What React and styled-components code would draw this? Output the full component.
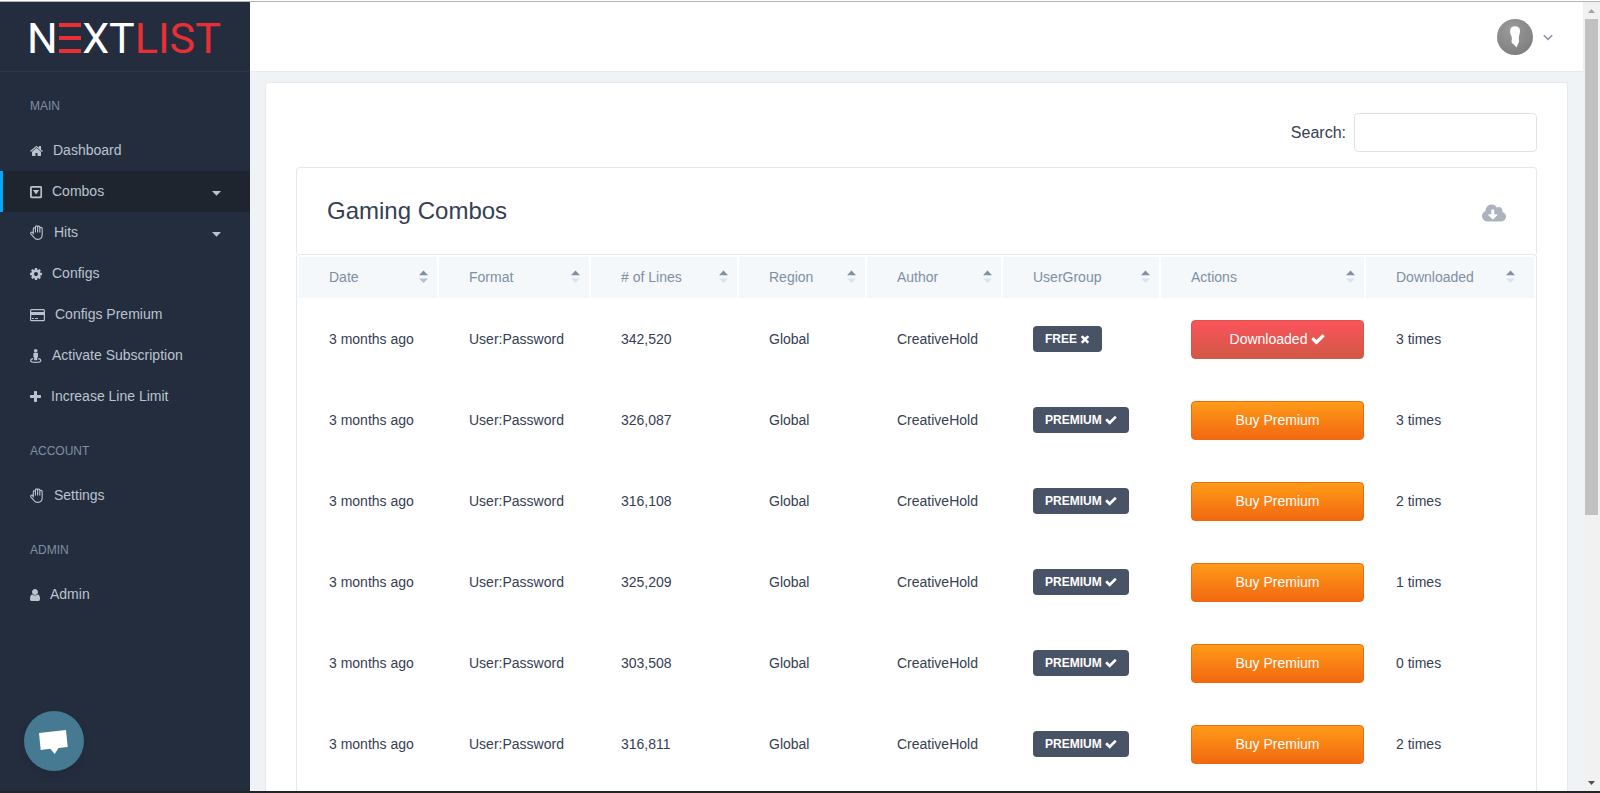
import React, { useState } from "react";
import styled, { createGlobalStyle, css } from "styled-components";
import { FaCloudDownloadAlt } from "react-icons/fa";

const GlobalStyle = createGlobalStyle`
  * {
    box-sizing: border-box;
  }
  body {
    margin: 0;
    font-family: "Liberation Sans", Arial, sans-serif;
    font-size: 14px;
    color: #354052;
    background: #eff3f6;
  }
  button, input {
    font-family: inherit;
  }
`;

/* ---------- icons ---------- */

const Glyph = styled.svg`
  display: block;
  flex: none;
  width: ${({ $w }) => $w || 14}px;
  height: ${({ $h }) => $h || 14}px;
  fill: currentColor;
`;

const HomeIcon = () => (
  <Glyph $w={13} viewBox="64 0 1664 1792">
    <path d="M1472 992v480q0 26-19 45t-45 19h-384v-384h-256v384h-384q-26 0-45-19t-19-45v-480q0-1 .5-3t.5-3l575-474 575 474q1 2 1 6zm223-69l-62 74q-8 9-21 11h-3q-13 0-21-7l-692-577-692 577q-12 8-24 7-13-2-21-11l-62-74q-8-10-7-23.5t11-21.5l719-599q32-26 76-26t76 26l244 204v-195q0-14 9-23t23-9h192q14 0 23 9t9 23v408l219 182q10 8 11 21.5t-7 23.5z" />
  </Glyph>
);

const CaretSquareIcon = () => (
  <Glyph $w={12} viewBox="0 0 12 14">
    <rect
      x="0.9"
      y="1.9"
      width="10.4"
      height="10.4"
      rx="1"
      fill="none"
      stroke="currentColor"
      strokeWidth="1.8"
    />
    <path d="M2.900 5h6.400L6.100 9.600z" />
  </Glyph>
);

const HandIcon = () => (
  <Glyph $w={14} $h={15} viewBox="0 0 14 15">
    <path
      d="M3.300 9V3.800q0-1.100 1-1.100t1.100.9V2.100q0-1.200 1.100-1.200t1.100 1.100q0-.9 1.100-.9t1.100 1.200v.9q0-.8 1.200-.8t1.200 1.300V9.500q0 4.900-4.500 4.900H7.400q-2 0-3.200-1.700L1 9.100q-.7-1 .1-1.700t1.700.2zM5.400 3.500v4M7.600 2v5.500M9.800 3.200v4.300"
      fill="none"
      stroke="currentColor"
      strokeWidth="1.100"
      strokeLinejoin="round"
    />
  </Glyph>
);

const CogIcon = () => (
  <Glyph $w={12} viewBox="128 0 1536 1792">
    <path d="M1152 896q0-106-75-181t-181-75-181 75-75 181 75 181 181 75 181-75 75-181zm512-109v222q0 12-8 23t-20 13l-185 28q-19 54-39 91 35 50 107 138 10 12 10 25t-9 23q-27 37-99 108t-94 71q-12 0-26-9l-138-108q-44 23-91 38-16 136-29 186-7 28-36 28h-222q-14 0-24.5-8.5t-11.5-21.5l-28-184q-49-16-90-37l-141 107q-10 9-25 9-14 0-25-11-126-114-165-168-7-10-7-23 0-12 8-23 15-21 51-66.5t54-70.5q-27-50-41-99l-183-27q-13-2-21-12.5t-8-23.5v-222q0-12 8-23t19-13l186-28q14-46 39-92-40-57-107-138-10-12-10-24 0-10 9-23 26-36 98.5-107.5t94.5-71.5q13 0 26 10l138 107q44-23 91-38 16-136 29-186 7-28 36-28h222q14 0 24.5 8.5t11.5 21.5l28 184q49 16 90 37l142-107q9-9 24-9 13 0 25 10 129 119 165 170 7 8 7 22 0 12-8 23-15 21-51 66.5t-54 70.5q26 50 41 98l183 28q13 2 21 12.5t8 23.5z" />
  </Glyph>
);

const CardIcon = () => (
  <Glyph $w={15} viewBox="0 0 15 14">
    <rect
      x="0.6"
      y="1.6"
      width="13.8"
      height="11"
      rx="0.9"
      fill="none"
      stroke="currentColor"
      strokeWidth="1.2"
    />
    <path d="M.6 4h13.800v3H.6zM2 10h2v1H2zM5 10h3v1H5z" />
  </Glyph>
);

const StreetViewIcon = () => (
  <Glyph $w={12} viewBox="0 0 12 14">
    <circle cx="5.7" cy="1.8" r="1.8" />
    <path d="M4.400 3.800h2.600q1 0 1 1v3q0 .6-.7.6v2.300q0 .6-.6.6H4.700q-.6 0-.6-.6V8.400q-.7 0-.7-.6v-3q0-1 1-1z" />
    <path
      d="M3.200 9.700C1.600 10 .6 10.600.6 11.400c0 1.100 2.300 1.900 5.100 1.900s5.100-.8 5.100-1.900c0-.8-1-1.400-2.600-1.700"
      fill="none"
      stroke="currentColor"
      strokeWidth="1.2"
    />
  </Glyph>
);

const PlusIcon = () => (
  <Glyph $w={11} viewBox="192 0 1408 1792">
    <path d="M1600 736v192q0 40-28 68t-68 28h-416v416q0 40-28 68t-68 28h-192q-40 0-68-28t-28-68v-416h-416q-40 0-68-28t-28-68v-192q0-40 28-68t68-28h416v-416q0-40 28-68t68-28h192q40 0 68 28t28 68v416h416q40 0 68 28t28 68z" />
  </Glyph>
);

const UserIcon = () => (
  <Glyph $w={10} viewBox="256 0 1280 1792">
    <path d="M1536 1399q0 109-62.5 187t-150.5 78h-854q-88 0-150.5-78t-62.5-187q0-85 8.5-160.5t31.5-152 58.5-131 94-89 134.5-34.5q131 128 313 128t313-128q76 0 134.5 34.5t94 89 58.5 131 31.5 152 8.5 160.5zm-256-887q0 159-112.5 271.5t-271.5 112.5-271.5-112.5-112.5-271.5 112.5-271.5 271.5-112.5 271.5 112.5 112.5 271.5z" />
  </Glyph>
);

const CheckIcon = ({ size = 12 }) => (
  <Glyph $w={size} $h={size} viewBox="64 64 1664 1664">
    <path d="M1671 566q0 40-28 68l-724 724-136 136q-28 28-68 28t-68-28l-136-136-362-362q-28-28-28-68t28-68l136-136q28-28 68-28t68 28l294 295 656-657q28-28 68-28t68 28l136 136q28 28 28 68z" />
  </Glyph>
);

const TimesIcon = () => (
  <Glyph $w={10} $h={12} viewBox="192 0 1408 1792">
    <path d="M1490 1322q0 40-28 68l-136 136q-28 28-68 28t-68-28l-294-294-294 294q-28 28-68 28t-68-28l-136-136q-28-28-28-68t28-68l294-294-294-294q-28-28-28-68t28-68l136-136q28-28 68-28t68 28l294 294 294-294q28-28 68-28t68 28l136 136q28 28 28 68t-28 68l-294 294 294 294q28 28 28 68z" />
  </Glyph>
);

/* ---------- frame ---------- */

const Screen = styled.div`
  display: flex;
  flex-direction: column;
  height: 100vh;
  overflow: hidden;
  border-bottom: 2px solid #222427;
`;

const TopEdge = styled.div`
  flex: none;
  height: 2px;
  background: #fff;
  border-bottom: 1px solid #b4b4b4;
`;

const Layout = styled.div`
  position: relative;
  display: flex;
  flex: 1;
  min-height: 0;
`;

/* ---------- sidebar ---------- */

const Sidebar = styled.aside`
  flex: none;
  width: 250px;
  background: #242d3e;
`;

const LogoBar = styled.div`
  display: flex;
  align-items: center;
  height: 70px;
  padding: 2px 27px 0;
  border-bottom: 1px solid #2c3648;
`;

const Logo = styled.a`
  font-family: Roboto, "Liberation Sans", sans-serif;
  font-size: 43px;
  font-weight: 400;
  line-height: 50px;
  color: #fff;
  text-decoration: none;
`;

const LogoRed = styled.span`
  color: #e92f35;
`;

/* the E is three bars without a stem */
const LogoBars = styled.span`
  color: transparent;
  background: linear-gradient(#e92f35, #e92f35) 50% 10px / 22px 4px no-repeat,
    linear-gradient(#e92f35, #e92f35) 50% 23px / 22px 4px no-repeat,
    linear-gradient(#e92f35, #e92f35) 50% 36px / 22px 4px no-repeat;
`;

const MenuLabel = styled.h2`
  margin: 0;
  padding: 25px 30px 15px;
  font-size: 12px;
  font-weight: 400;
  line-height: 18px;
  color: #7f8fa4;
`;

const MenuList = styled.ul`
  margin: 0;
  padding: 0;
  list-style: none;
`;

const MenuLink = styled.a`
  display: flex;
  align-items: center;
  gap: 10px;
  height: 41px;
  padding: 0 29px 0 27px;
  border-left: 3px solid transparent;
  color: #b9c4cf;
  text-decoration: none;
  ${({ $active }) =>
    $active &&
    css`
      background: #1e252f;
      border-left-color: #00a8ff;
    `}
`;

const MenuText = styled.span`
  flex: 1;
  padding-bottom: 2px;
`;

const ChatButton = styled.button`
  position: absolute;
  left: 24px;
  bottom: 20px;
  width: 60px;
  height: 60px;
  padding: 0;
  border: 0;
  border-radius: 50%;
  background: #467a92;
  box-shadow: 0 3px 8px rgba(0, 0, 0, 0.1);
`;

const ChatGlyph = styled.svg`
  display: block;
  width: 60px;
  height: 60px;
  fill: #fff;
`;

/* ---------- main ---------- */

const Main = styled.main`
  display: flex;
  flex-direction: column;
  flex: 1;
  min-width: 0;
`;

const Header = styled.header`
  display: flex;
  flex: none;
  align-items: center;
  justify-content: flex-end;
  height: 70px;
  padding-right: 30px;
  background: #fff;
  border-bottom: 1px solid #e6eaee;
`;

const ProfileButton = styled.button`
  display: flex;
  align-items: center;
  gap: 10px;
  padding: 0;
  border: 0;
  background: none;
  color: #8a93ab;
`;

const Content = styled.section`
  display: flex;
  flex: 1;
  min-height: 0;
  padding: 10px 15px 0;
`;

const Card = styled.div`
  display: flex;
  flex-direction: column;
  flex: 1;
  min-width: 0;
  padding: 30px 30px 0;
  background: #fff;
  border: 1px solid #e6eaee;
  border-bottom: 0;
  border-radius: 4px 4px 0 0;
`;

const SearchRow = styled.div`
  display: flex;
  align-items: center;
  justify-content: flex-end;
  gap: 8px;
  margin-bottom: 15px;
  font-size: 16px;
`;

const SearchInput = styled.input`
  width: 183px;
  height: 39px;
  padding: 0 12px;
  font-size: 14px;
  color: #354052;
  background: #fff;
  border: 1px solid #dfe3e9;
  border-radius: 4px;
`;

const PanelHead = styled.div`
  display: flex;
  flex: none;
  align-items: center;
  justify-content: space-between;
  height: 87px;
  padding: 0 30px;
  border: 1px solid #e6e8ee;
  border-bottom: 0;
  border-radius: 4px 4px 0 0;
`;

const Title = styled.h1`
  margin: 0;
  font-size: 24px;
  font-weight: 400;
  line-height: 36px;
`;

const CloudButton = styled.button`
  display: flex;
  padding: 4px 0 0;
  border: 0;
  background: none;
  color: #adb3bd;
`;

const TableWrap = styled.div`
  flex: 1;
  min-height: 0;
  border: 1px solid #e6e8ee;
  border-bottom: 0;
  border-radius: 4px 4px 0 0;
`;

const Table = styled.table`
  width: 100%;
  table-layout: fixed;
  border-collapse: separate;
  border-spacing: 2px;
`;

const Col = styled.col`
  width: ${({ $w }) => $w}px;
`;

const Th = styled.th`
  padding: 0;
  background: #f4f8fb;
`;

const SortButton = styled.button`
  display: flex;
  align-items: center;
  justify-content: space-between;
  width: 100%;
  height: 41px;
  padding: 0 ${({ $last }) => ($last ? 19 : 9)}px 2px 30px;
  border: 0;
  background: none;
  font-size: 14px;
  color: #7f8fa4;
`;

const Td = styled.td`
  height: 79px;
  padding: 19px 0 21px 30px;
`;

const ActionTd = styled(Td)`
  padding: 20px 0 20px 30px;
`;

const Badge = styled.span`
  display: inline-flex;
  align-items: center;
  gap: 3px;
  height: 26px;
  padding: 0 12px;
  border-radius: 4px;
  background: #495366;
  color: #fff;
  font-size: 12px;
  font-weight: 700;
`;

const ActionButton = styled.button`
  display: flex;
  align-items: center;
  justify-content: center;
  gap: 4px;
  width: 100%;
  height: 39px;
  padding: 0 0 2px;
  font-size: 14px;
  color: #fff;
  border: 1px solid ${({ $done }) => ($done ? "#d45848" : "#f1690f")};
  border-radius: 4px;
  background: ${({ $done }) =>
    $done
      ? "linear-gradient(#fb545b, #d15846)"
      : "linear-gradient(#ff9b19, #f26810)"};
`;

/* ---------- scrollbar ---------- */

const Scrollbar = styled.div`
  display: flex;
  flex-direction: column;
  flex: none;
  align-items: center;
  width: 17px;
  background: #f1f1f1;
`;

const ScrollEnd = styled.div`
  display: flex;
  flex: none;
  align-items: center;
  justify-content: center;
  height: 17px;
  color: ${({ $on }) => ($on ? "#505050" : "#a3a3a3")};
`;

const Thumb = styled.div`
  flex: 23;
  width: 13px;
  background: #c1c1c1;
`;

const Track = styled.div`
  flex: 12;
`;

const mainMenu = [
  { name: "Dashboard", icon: <HomeIcon /> },
  { name: "Combos", icon: <CaretSquareIcon />, sub: true },
  { name: "Hits", icon: <HandIcon />, sub: true },
  { name: "Configs", icon: <CogIcon /> },
  { name: "Configs Premium", icon: <CardIcon /> },
  { name: "Activate Subscription", icon: <StreetViewIcon /> },
  { name: "Increase Line Limit", icon: <PlusIcon /> },
];

const menus = [
  { label: "MAIN", items: mainMenu },
  { label: "ACCOUNT", items: [{ name: "Settings", icon: <HandIcon /> }] },
  { label: "ADMIN", items: [{ name: "Admin", icon: <UserIcon /> }] },
];

const columns = [
  { name: "Date", width: 138 },
  { name: "Format", width: 150 },
  { name: "# of Lines", width: 146 },
  { name: "Region", width: 126 },
  { name: "Author", width: 134 },
  { name: "UserGroup", width: 156 },
  { name: "Actions", width: 203 },
  { name: "Downloaded", width: 168 },
];

const combos = [
  { lines: "342,520", free: true, times: 3 },
  { lines: "326,087", times: 3 },
  { lines: "316,108", times: 2 },
  { lines: "325,209", times: 1 },
  { lines: "303,508", times: 0 },
  { lines: "316,811", times: 2 },
];

const Menu = () => {
  const [active, setActive] = useState("Combos");

  return (
    <nav>
      {menus.map((menu) => (
        <React.Fragment key={menu.label}>
          <MenuLabel>{menu.label}</MenuLabel>
          <MenuList>
            {menu.items.map((item) => (
              <li key={item.name}>
                <MenuLink
                  href="#"
                  $active={active === item.name}
                  onClick={() => setActive(item.name)}
                >
                  {item.icon}
                  <MenuText>{item.name}</MenuText>
                  {item.sub && (
                    <Glyph $w={9} $h={10} viewBox="0 0 9 10">
                      <path d="M0 4h9L4.500 8.700z" />
                    </Glyph>
                  )}
                </MenuLink>
              </li>
            ))}
          </MenuList>
        </React.Fragment>
      ))}
    </nav>
  );
};

const SortArrows = ({ sorted }) => (
  <Glyph $w={9} $h={13} viewBox="0 0 9 13">
    <path d="M0 5.300L4.500.5 9 5.300z" />
    <path d="M0 8.500h9L4.500 13z" fill={sorted ? "#b8c2ce" : "#dfe3e9"} />
  </Glyph>
);

const CombosTable = () => {
  const [sorted, setSorted] = useState("Date");

  return (
    <Table>
      <colgroup>
        {columns.map((col) => (
          <Col key={col.name} $w={col.width} />
        ))}
      </colgroup>
      <thead>
        <tr>
          {columns.map((col, i) => (
            <Th key={col.name} scope="col">
              <SortButton
                $last={i === columns.length - 1}
                onClick={() => setSorted(col.name)}
              >
                {col.name}
                <SortArrows sorted={sorted === col.name} />
              </SortButton>
            </Th>
          ))}
        </tr>
      </thead>
      <tbody>
        {combos.map((combo) => (
          <tr key={combo.lines}>
            <Td>3 months ago</Td>
            <Td>User:Password</Td>
            <Td>{combo.lines}</Td>
            <Td>Global</Td>
            <Td>CreativeHold</Td>
            <Td>
              <Badge>
                {combo.free ? "FREE" : "PREMIUM"}
                {combo.free ? <TimesIcon /> : <CheckIcon />}
              </Badge>
            </Td>
            <ActionTd>
              <ActionButton $done={combo.free}>
                {combo.free ? "Downloaded" : "Buy Premium"}
                {combo.free && <CheckIcon size={14} />}
              </ActionButton>
            </ActionTd>
            <Td>{combo.times} times</Td>
          </tr>
        ))}
      </tbody>
    </Table>
  );
};

const Profile = () => (
  <ProfileButton aria-label="Profile">
    <Glyph $w={36} $h={36} viewBox="0 0 36 36">
      <defs>
        <radialGradient id="avatar" cx="0.4" cy="0.3" r="0.8">
          <stop offset="0" stopColor="#9b9b9b" />
          <stop offset="1" stopColor="#7c7c7c" />
        </radialGradient>
      </defs>
      <circle cx="18" cy="18" r="18" fill="url(#avatar)" />
      <path
        d="M18 7.200c3.200 0 5 1.600 5 4.600 0 2.200-.5 3.600-1 5.200-.3 1.500-.3 2.800 0 4.200.2 1.600-.2 2.500-1 3.600l-1.400 3.600-2.800-2.900c-1.700-1.200-2.500-2-2.300-3.500.6-1.500.5-3-.2-5.200-.9-2-1.300-3.600-1.100-5.400C13.500 8.600 15 7.200 18 7.200z"
        fill="#fff"
      />
    </Glyph>
    <Glyph $w={10} $h={10} viewBox="0 0 10 10">
      <path
        d="M.8 3.200L5 7.400l4.200-4.200"
        fill="none"
        stroke="currentColor"
        strokeWidth="1.500"
      />
    </Glyph>
  </ProfileButton>
);

const App = () => {
  const [search, setSearch] = useState("");

  return (
    <Screen>
      <GlobalStyle />
      <TopEdge />
      <Layout>
        <Sidebar>
          <LogoBar>
            <Logo href="#">
              N<LogoBars>E</LogoBars>XT<LogoRed>LIST</LogoRed>
            </Logo>
          </LogoBar>
          <Menu />
        </Sidebar>
        <Main>
          <Header>
            <Profile />
          </Header>
          <Content>
            <Card>
              <SearchRow>
                <label htmlFor="search">Search:</label>
                <SearchInput
                  id="search"
                  type="search"
                  value={search}
                  onChange={(e) => setSearch(e.target.value)}
                />
              </SearchRow>
              <PanelHead>
                <Title>Gaming Combos</Title>
                <CloudButton aria-label="Download">
                  <FaCloudDownloadAlt size={24} />
                </CloudButton>
              </PanelHead>
              <TableWrap>
                <CombosTable />
              </TableWrap>
            </Card>
          </Content>
        </Main>
        <Scrollbar>
          <ScrollEnd>
            <Glyph $w={7} $h={4} viewBox="0 0 7 4">
              <path d="M0 4l3.500-4L7 4z" />
            </Glyph>
          </ScrollEnd>
          <Thumb />
          <Track />
          <ScrollEnd $on>
            <Glyph $w={7} $h={4} viewBox="0 0 7 4">
              <path d="M0 0h7L3.500 4z" />
            </Glyph>
          </ScrollEnd>
        </Scrollbar>
        <ChatButton aria-label="Chat">
          <ChatGlyph viewBox="0 0 60 60">
            <path d="M15 22l27-3 1.700 17-9.200.9-3.800 6.100-4.400-5.200-9.600 1.200z" />
          </ChatGlyph>
        </ChatButton>
      </Layout>
    </Screen>
  );
};

export default App;
